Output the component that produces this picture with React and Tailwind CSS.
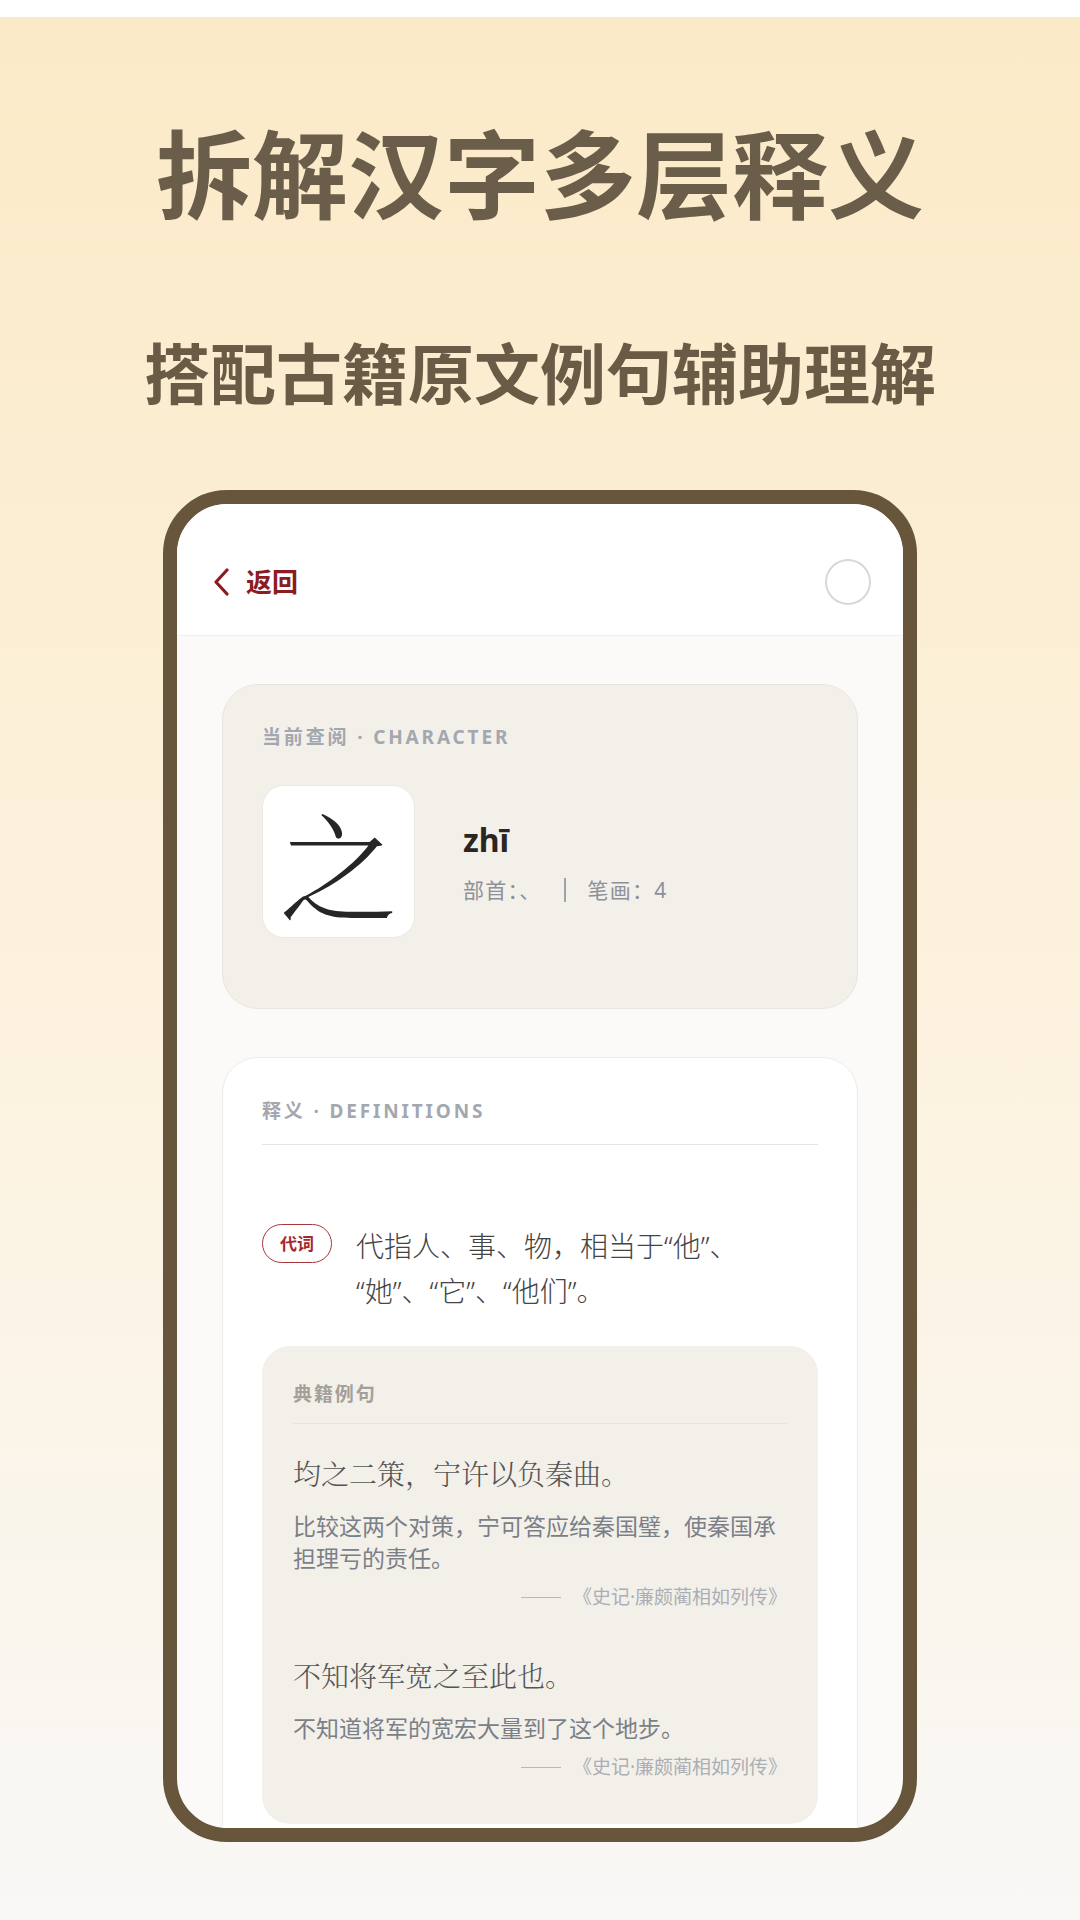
import React from 'react';

const quotes = [
  {
    text: '均之二策，宁许以负秦曲。',
    meaning: '比较这两个对策，宁可答应给秦国璧，使秦国承担理亏的责任。',
    source: '《史记·廉颇蔺相如列传》',
  },
  {
    text: '不知将军宽之至此也。',
    meaning: '不知道将军的宽宏大量到了这个地步。',
    source: '《史记·廉颇蔺相如列传》',
  },
];

function SectionLabel({ children }) {
  return (
    <div className="text-[19px] leading-[20px] font-bold tracking-[0.15em] text-[#a3a7af]">
      {children}
    </div>
  );
}

function QuoteItem({ quote, first }) {
  return (
    <div className={first ? 'mt-[29px]' : 'mt-[45px]'}>
      <p className="font-['Noto_Serif_CJK_SC','Noto_Sans_CJK_SC',serif] text-[28px] leading-[40px] font-light text-[#555555]">
        {quote.text}
      </p>
      <p className="mt-[17px] text-[23px] leading-[32px] text-[#7b7f87]">{quote.meaning}</p>
      <div className="mt-[10px] flex items-center justify-end gap-[12px] text-[19px] leading-[26px] text-[#abaeb5]">
        <span className="inline-block w-[40px] h-px bg-[#b9b9b9]" />
        <span>{quote.source}</span>
      </div>
    </div>
  );
}

function App() {
  return (
    <div className="w-[1080px] h-[1920px] overflow-hidden flex flex-col bg-linear-to-b from-[#fbeac7] via-[#fcf2df] via-55% to-[#f9f8f6] font-['Noto_Sans','Noto_Sans_CJK_SC',sans-serif]">
      <div className="h-[17px] bg-white shrink-0" />

      <h1 className="mt-[109px] text-center text-[96px] leading-[96px] font-bold text-[#6a5d4a]">
        拆解汉字多层释义
      </h1>
      <h2 className="mt-[118px] text-center text-[66px] leading-[66px] font-bold text-[#6a5b46]">
        搭配古籍原文例句辅助理解
      </h2>

      {/* phone */}
      <div className="mt-[84px] mx-auto w-[754px] h-[1352px] shrink-0 border-[14px] border-[#67563b] rounded-[64px] overflow-hidden bg-[#fcfaf8] flex flex-col">
        <div className="bg-white border-b border-[#f1ede9] pl-[35px] pr-[32px] pt-[55px] pb-[30px] flex items-center justify-between">
          <div className="flex items-center gap-[16px] text-[#8b1c1f]">
            <svg width="18" height="28" viewBox="0 0 18 28" fill="none">
              <path d="M15 2 L4 14 L15 26" stroke="currentColor" strokeWidth="3.2" strokeLinecap="round" strokeLinejoin="round" />
            </svg>
            <span className="text-[26px] leading-[30px] font-bold">返回</span>
          </div>
          <div className="w-[46px] h-[46px] rounded-full border-2 border-[#d8d8d8]" />
        </div>

        <div className="px-[45px] pt-[48px] flex flex-col gap-[48px]">
          {/* character card */}
          <div className="rounded-[36px] bg-[#f3f0ea] border border-[#e9e5de] pt-[42px] px-[39px] pb-[70px]">
            <SectionLabel>当前查阅 · CHARACTER</SectionLabel>
            <div className="mt-[38px] flex items-center">
              <div className="w-[153px] h-[153px] rounded-[22px] bg-white border border-[#ece8e2] flex items-center justify-center">
                <span className="font-['Noto_Serif_CJK_SC','Noto_Sans_CJK_SC',serif] text-[118px] leading-none font-light text-[#262626]">
                  之
                </span>
              </div>
              <div className="ml-[48px]">
                <div className="text-[32px] leading-[40px] font-bold text-[#2a2622]">zhī</div>
                <div className="mt-[16px] flex items-center text-[21px] leading-[28px] text-[#8d9099]">
                  <span className="tracking-[0.06em]">部首：、</span>
                  <span className="mx-[22px] w-[2px] h-[24px] bg-[#a0a3aa]" />
                  <span className="tracking-[0.06em]">笔画：4</span>
                </div>
              </div>
            </div>
          </div>

          {/* definitions card */}
          <div className="rounded-[36px] bg-white border border-[#efebe6] pt-[43px] px-[39px] pb-[60px]">
            <SectionLabel>释义 · DEFINITIONS</SectionLabel>
            <div className="mt-[23px] h-px bg-[#e8e6e3]" />

            <div className="mt-[79px] flex items-start">
              <span className="shrink-0 h-[39px] px-[17px] rounded-full border-[1.5px] border-[#a8373a] text-[#a52a2e] text-[17px] font-bold flex items-center">
                代词
              </span>
              <p className="ml-[24px] text-[28px] leading-[45px] font-light text-[#444444]">
                代指人、事、物，相当于“他”、
                <br />
                “她”、“它”、“他们”。
              </p>
            </div>

            <div className="mt-[32px] rounded-[28px] bg-[#f3f0ea] pt-[38px] px-[31px] pb-[44px]">
              <div className="text-[19px] leading-[20px] font-bold tracking-[0.1em] text-[#a39f99]">典籍例句</div>
              <div className="mt-[19px] h-px bg-[#e9e5dd]" />
              {quotes.map((q, i) => (
                <QuoteItem key={i} quote={q} first={i === 0} />
              ))}
            </div>
          </div>
        </div>
      </div>
    </div>
  );
}

export default App;
